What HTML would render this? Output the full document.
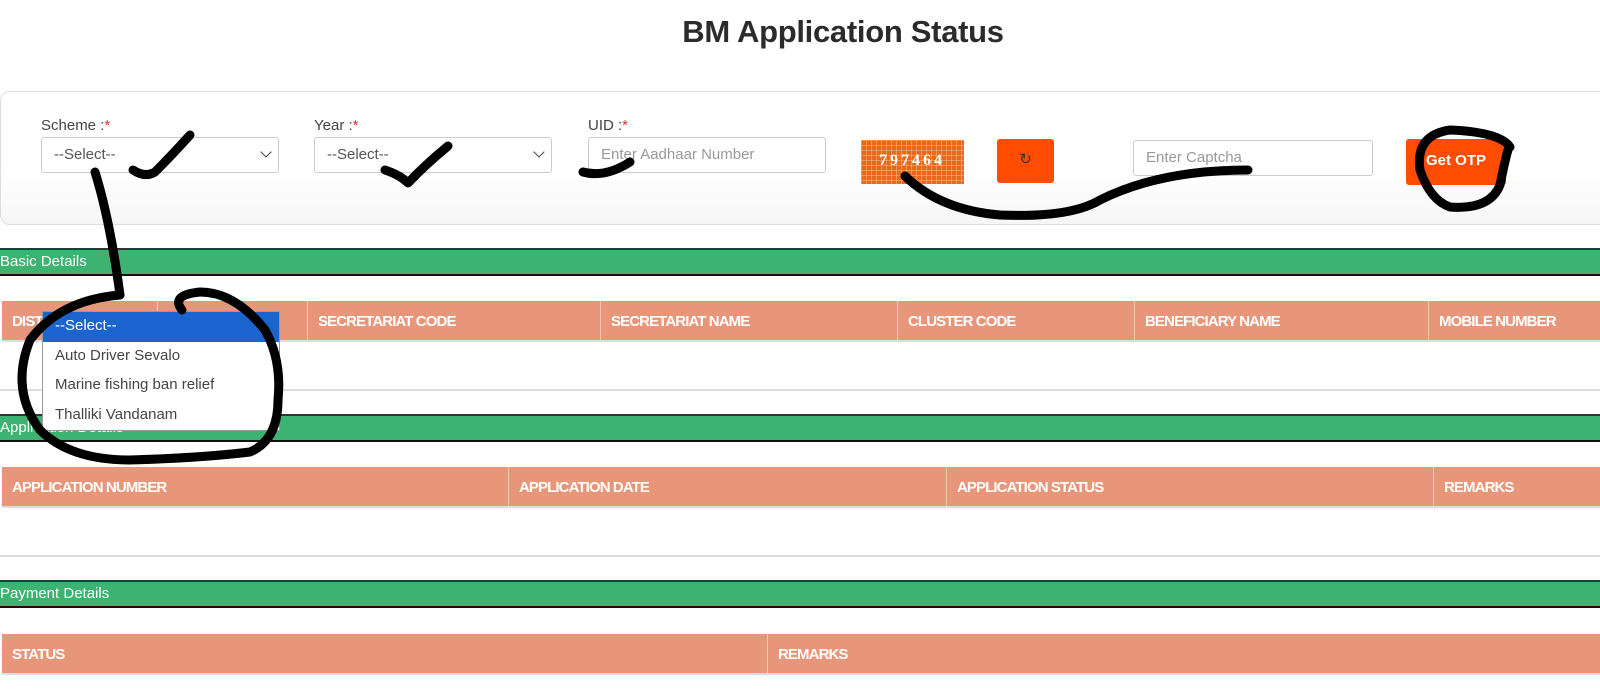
<!DOCTYPE html>
<html><head><meta charset="utf-8"><style>
*{box-sizing:border-box;margin:0;padding:0}
body{width:1600px;height:699px;background:#fff;position:relative;overflow:hidden;font-family:"Liberation Sans",sans-serif;color:#333}
.abs{position:absolute}
h1{position:absolute;left:0;width:1686px;text-align:center;top:14px;font-size:31px;font-weight:bold;color:#2b2b2b;letter-spacing:-0.3px}
.card{left:0;top:91px;width:1640px;height:134px;border:1px solid #ddd;border-radius:10px;background:linear-gradient(#fff 60%,#f6f6f6)}
.lbl{font-size:15px;color:#444}
.lbl b{color:#d33;font-weight:normal}
.sel,.inp{height:36px;border:1px solid #ccc;border-radius:3px;background:#fff;font-size:15px;color:#555;padding:8px 12px}
.inp{color:#999}
.chev{position:absolute;right:8px;top:10px;width:8px;height:8px;border-right:1.5px solid #444;border-bottom:1.5px solid #444;transform:rotate(45deg)}
.green{left:0;width:1600px;height:28px;background:#3cb371;border-top:2px solid #333;border-bottom:2px solid #111;color:#fff;font-size:15px;padding:3px 0 0 0}
.hdr{left:2px;width:1600px;height:41px;background:#e8967a;border-bottom:2px solid #ddd;color:#fff;font-family:"Liberation Sans",sans-serif;font-weight:bold;font-size:15px;letter-spacing:-0.9px}
.hdr div{position:absolute;top:0;height:39px;padding:12px 0 0 10px;border-left:1.5px solid #f4c8b8}
.sep{left:0;width:1600px;height:2px;background:#ddd}
.dd{left:42px;top:311px;width:238px;height:120px;background:#fff;border:1px solid #999;font-size:15px;color:#444}
.dd div{height:29.5px;padding:5px 12px}
</style></head><body>
<h1>BM Application Status</h1>
<div class="abs card"></div>
<div class="abs lbl" style="left:41px;top:117px">Scheme :<b>*</b></div>
<div class="abs lbl" style="left:314px;top:117px">Year :<b>*</b></div>
<div class="abs lbl" style="left:588px;top:117px">UID :<b>*</b></div>
<div class="abs sel" style="left:41px;top:137px;width:238px">--Select--<span class="chev"></span></div>
<div class="abs sel" style="left:314px;top:137px;width:238px">--Select--<span class="chev"></span></div>
<div class="abs inp" style="left:588px;top:137px;width:238px">Enter Aadhaar Number</div>
<div class="abs" style="left:861px;top:140px;width:103px;height:44px;background-color:#e8681c;background-image:linear-gradient(90deg,rgba(255,200,150,.45) 1px,transparent 1px),linear-gradient(rgba(255,200,150,.45) 1px,transparent 1px);background-size:5px 5px;color:#fff;font-family:'Liberation Serif',serif;font-weight:bold;font-size:16px;letter-spacing:3px;padding:12px 0 0 18px">797464</div>
<div class="abs" style="left:997px;top:139px;width:57px;height:44px;background:#ff4c00;border-radius:3px;color:#333;font-size:15px;text-align:center;padding-top:11px">&#x21bb;</div>
<div class="abs inp" style="left:1133px;top:140px;width:240px">Enter Captcha</div>
<div class="abs" style="left:1406px;top:139px;width:100px;height:46px;background:#ff4c00;border-radius:3px;color:#fff;font-weight:bold;font-size:15px;padding:13px 0 0 20px">Get OTP</div>

<div class="abs green" style="top:248px">Basic Details</div>
<div class="abs hdr" style="top:301px">
<div style="left:0;border:none">DISTRICT</div><div style="left:155px"></div><div style="left:305px">SECRETARIAT CODE</div><div style="left:598px">SECRETARIAT NAME</div><div style="left:895px">CLUSTER CODE</div><div style="left:1132px">BENEFICIARY NAME</div><div style="left:1426px">MOBILE NUMBER</div></div>
<div class="abs sep" style="top:389px"></div>
<div class="abs green" style="top:414px">Application Details</div>
<div class="abs hdr" style="top:467px">
<div style="left:0;border:none">APPLICATION NUMBER</div><div style="left:506px">APPLICATION DATE</div><div style="left:944px">APPLICATION STATUS</div><div style="left:1431px">REMARKS</div></div>
<div class="abs sep" style="top:555px"></div>
<div class="abs green" style="top:580px">Payment Details</div>
<div class="abs hdr" style="top:634px">
<div style="left:0;border:none">STATUS</div><div style="left:765px">REMARKS</div></div>

<div class="abs dd">
<div style="background:#1a64d0;color:#fff">--Select--</div>
<div>Auto Driver Sevalo</div>
<div>Marine fishing ban relief</div>
<div>Thalliki Vandanam</div>
</div>

<svg class="abs" style="left:0;top:0" width="1600" height="699" fill="none" stroke="#000" stroke-width="9" stroke-linecap="round" stroke-linejoin="round">
<path d="M133 170 Q145 178 155 172 Q172 155 190 135"/>
<path d="M385 170 Q400 175 408 183 Q425 165 448 146"/>
<path d="M583 172 Q605 178 630 162"/>
<path d="M95 172 Q110 220 120 295"/>
<path d="M120 295 Q60 300 30 340 Q10 390 40 430 Q70 460 130 460 Q200 458 250 452 Q278 440 278 400 Q282 360 265 330 Q235 292 200 292 Q170 295 182 310"/>
<path d="M905 176 Q940 210 1000 215 Q1070 218 1100 200 Q1160 170 1248 170"/>
<path d="M1510 147 Q1500 132 1450 130 Q1415 135 1420 170 Q1430 200 1450 207 Q1490 210 1500 185 Q1505 160 1508 150"/>
</svg>
</body></html>
